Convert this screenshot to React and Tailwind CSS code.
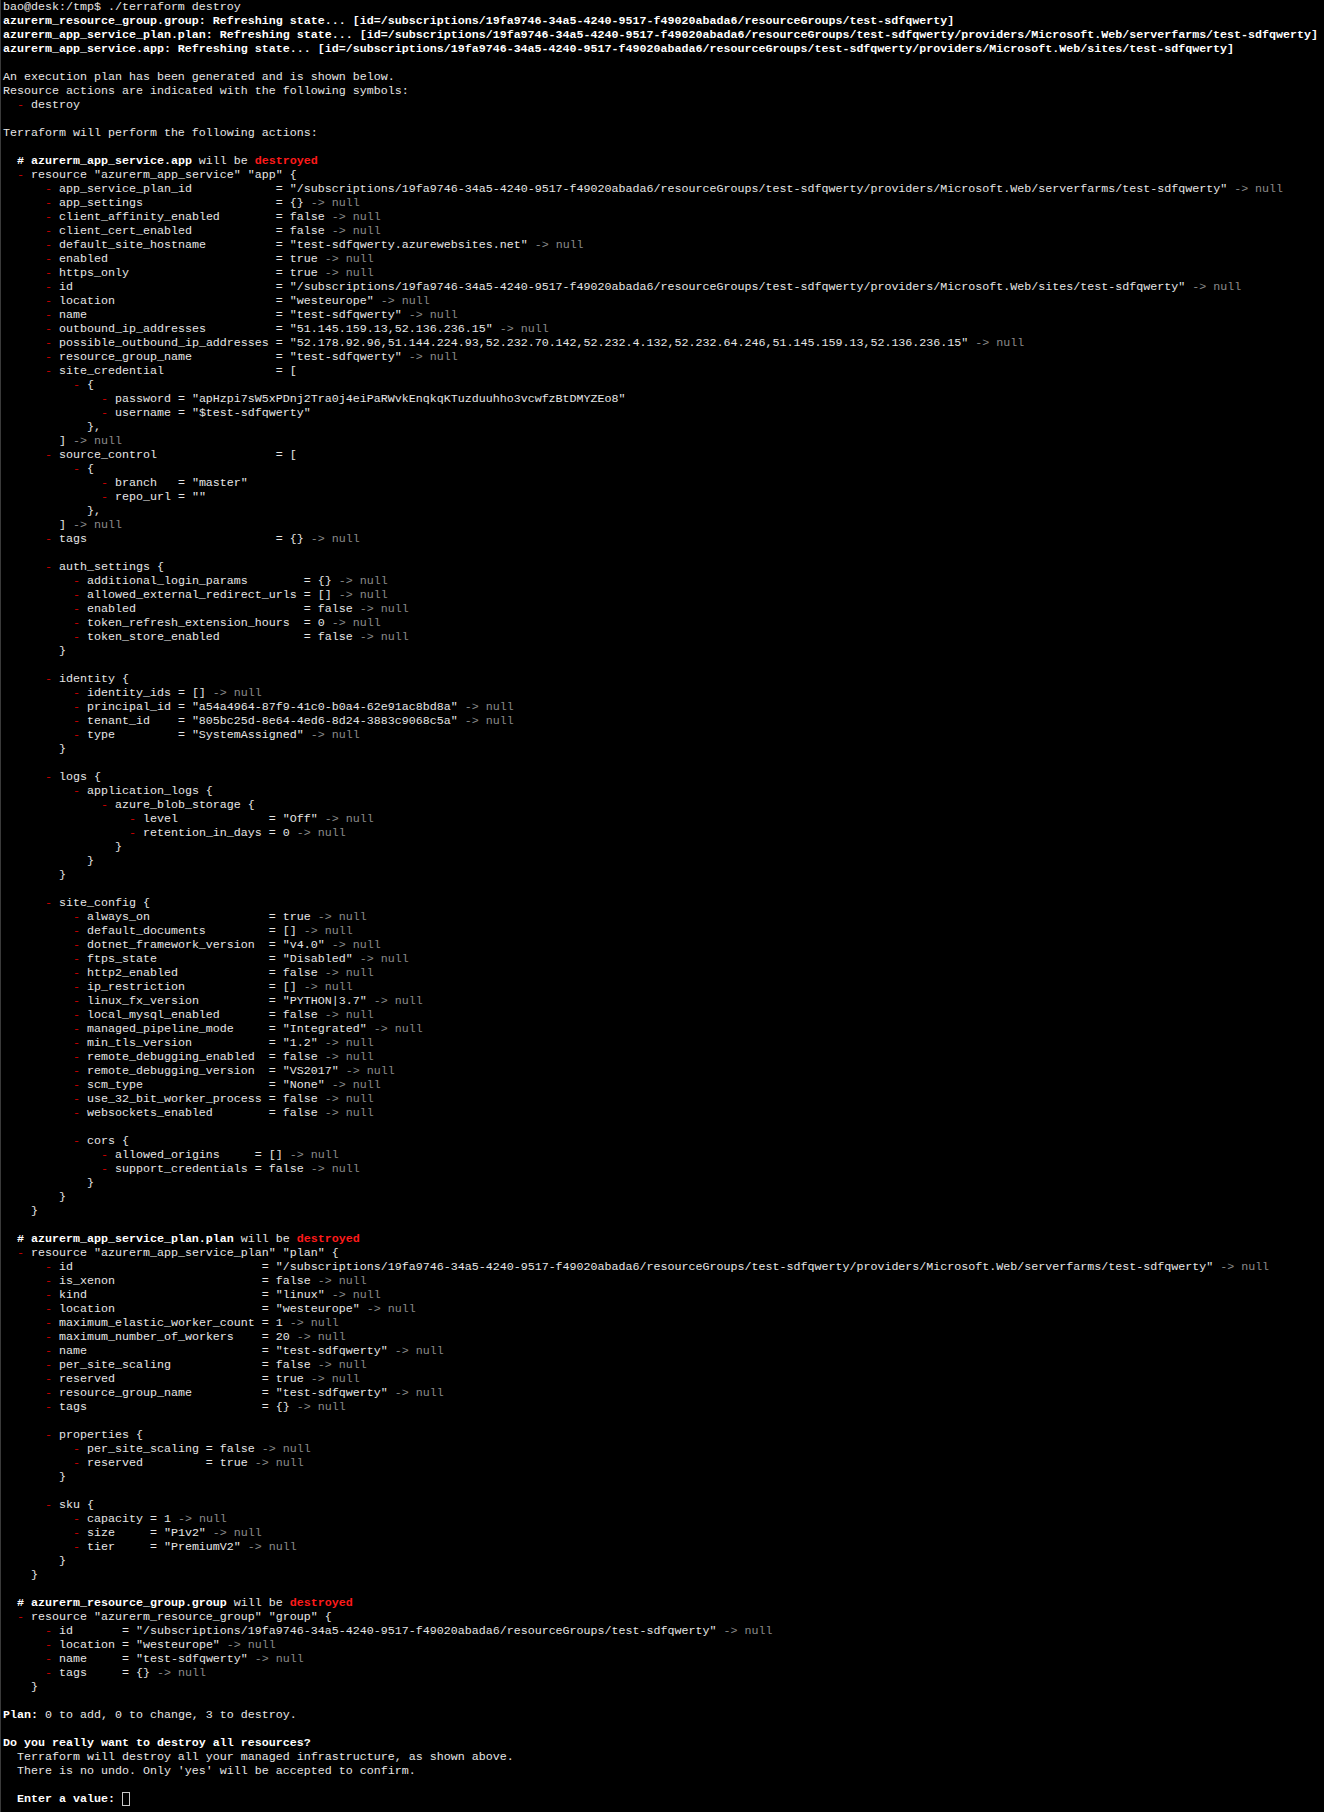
import React from 'react';

const SUB = '/subscriptions/19fa9746-34a5-4240-9517-f49020abada6/resourceGroups/test-sdfqwerty';

// attribute line: indent, key column width, key, value
const a = (ind, w, key, val, nul = true) =>
  ' '.repeat(ind) + '- ' + key.padEnd(w) + ' = ' + val + (nul ? ' -> null' : '');

const B = 'font-bold text-white';
const R = 'font-bold text-[#ff1a1a]';

const header = (name) => ({
  segs: [['  '], ['# ' + name, B], [' will be '], ['destroyed', R]],
});

const lines = [
  'bao@desk:/tmp$ ./terraform destroy',
  { segs: [['azurerm_resource_group.group: Refreshing state... [id=' + SUB + ']', B]] },
  { segs: [['azurerm_app_service_plan.plan: Refreshing state... [id=' + SUB + '/providers/Microsoft.Web/serverfarms/test-sdfqwerty]', B]] },
  { segs: [['azurerm_app_service.app: Refreshing state... [id=' + SUB + '/providers/Microsoft.Web/sites/test-sdfqwerty]', B]] },
  '',
  'An execution plan has been generated and is shown below.',
  'Resource actions are indicated with the following symbols:',
  '  - destroy',
  '',
  'Terraform will perform the following actions:',
  '',
  header('azurerm_app_service.app'),
  '  - resource "azurerm_app_service" "app" {',
  a(6, 30, 'app_service_plan_id', '"' + SUB + '/providers/Microsoft.Web/serverfarms/test-sdfqwerty"'),
  a(6, 30, 'app_settings', '{}'),
  a(6, 30, 'client_affinity_enabled', 'false'),
  a(6, 30, 'client_cert_enabled', 'false'),
  a(6, 30, 'default_site_hostname', '"test-sdfqwerty.azurewebsites.net"'),
  a(6, 30, 'enabled', 'true'),
  a(6, 30, 'https_only', 'true'),
  a(6, 30, 'id', '"' + SUB + '/providers/Microsoft.Web/sites/test-sdfqwerty"'),
  a(6, 30, 'location', '"westeurope"'),
  a(6, 30, 'name', '"test-sdfqwerty"'),
  a(6, 30, 'outbound_ip_addresses', '"51.145.159.13,52.136.236.15"'),
  a(6, 30, 'possible_outbound_ip_addresses', '"52.178.92.96,51.144.224.93,52.232.70.142,52.232.4.132,52.232.64.246,51.145.159.13,52.136.236.15"'),
  a(6, 30, 'resource_group_name', '"test-sdfqwerty"'),
  a(6, 30, 'site_credential', '[', false),
  '          - {',
  a(14, 8, 'password', '"apHzpi7sW5xPDnj2Tra0j4eiPaRWvkEnqkqKTuzduuhho3vcwfzBtDMYZEo8"', false),
  a(14, 8, 'username', '"$test-sdfqwerty"', false),
  '            },',
  '        ] -> null',
  a(6, 30, 'source_control', '[', false),
  '          - {',
  a(14, 8, 'branch', '"master"', false),
  a(14, 8, 'repo_url', '""', false),
  '            },',
  '        ] -> null',
  a(6, 30, 'tags', '{}'),
  '',
  '      - auth_settings {',
  a(10, 30, 'additional_login_params', '{}'),
  a(10, 30, 'allowed_external_redirect_urls', '[]'),
  a(10, 30, 'enabled', 'false'),
  a(10, 30, 'token_refresh_extension_hours', '0'),
  a(10, 30, 'token_store_enabled', 'false'),
  '        }',
  '',
  '      - identity {',
  a(10, 12, 'identity_ids', '[]'),
  a(10, 12, 'principal_id', '"a54a4964-87f9-41c0-b0a4-62e91ac8bd8a"'),
  a(10, 12, 'tenant_id', '"805bc25d-8e64-4ed6-8d24-3883c9068c5a"'),
  a(10, 12, 'type', '"SystemAssigned"'),
  '        }',
  '',
  '      - logs {',
  '          - application_logs {',
  '              - azure_blob_storage {',
  a(18, 17, 'level', '"Off"'),
  a(18, 17, 'retention_in_days', '0'),
  '                }',
  '            }',
  '        }',
  '',
  '      - site_config {',
  a(10, 25, 'always_on', 'true'),
  a(10, 25, 'default_documents', '[]'),
  a(10, 25, 'dotnet_framework_version', '"v4.0"'),
  a(10, 25, 'ftps_state', '"Disabled"'),
  a(10, 25, 'http2_enabled', 'false'),
  a(10, 25, 'ip_restriction', '[]'),
  a(10, 25, 'linux_fx_version', '"PYTHON|3.7"'),
  a(10, 25, 'local_mysql_enabled', 'false'),
  a(10, 25, 'managed_pipeline_mode', '"Integrated"'),
  a(10, 25, 'min_tls_version', '"1.2"'),
  a(10, 25, 'remote_debugging_enabled', 'false'),
  a(10, 25, 'remote_debugging_version', '"VS2017"'),
  a(10, 25, 'scm_type', '"None"'),
  a(10, 25, 'use_32_bit_worker_process', 'false'),
  a(10, 25, 'websockets_enabled', 'false'),
  '',
  '          - cors {',
  a(14, 19, 'allowed_origins', '[]'),
  a(14, 19, 'support_credentials', 'false'),
  '            }',
  '        }',
  '    }',
  '',
  header('azurerm_app_service_plan.plan'),
  '  - resource "azurerm_app_service_plan" "plan" {',
  a(6, 28, 'id', '"' + SUB + '/providers/Microsoft.Web/serverfarms/test-sdfqwerty"'),
  a(6, 28, 'is_xenon', 'false'),
  a(6, 28, 'kind', '"linux"'),
  a(6, 28, 'location', '"westeurope"'),
  a(6, 28, 'maximum_elastic_worker_count', '1'),
  a(6, 28, 'maximum_number_of_workers', '20'),
  a(6, 28, 'name', '"test-sdfqwerty"'),
  a(6, 28, 'per_site_scaling', 'false'),
  a(6, 28, 'reserved', 'true'),
  a(6, 28, 'resource_group_name', '"test-sdfqwerty"'),
  a(6, 28, 'tags', '{}'),
  '',
  '      - properties {',
  a(10, 16, 'per_site_scaling', 'false'),
  a(10, 16, 'reserved', 'true'),
  '        }',
  '',
  '      - sku {',
  a(10, 8, 'capacity', '1'),
  a(10, 8, 'size', '"P1v2"'),
  a(10, 8, 'tier', '"PremiumV2"'),
  '        }',
  '    }',
  '',
  header('azurerm_resource_group.group'),
  '  - resource "azurerm_resource_group" "group" {',
  a(6, 8, 'id', '"' + SUB + '"'),
  a(6, 8, 'location', '"westeurope"'),
  a(6, 8, 'name', '"test-sdfqwerty"'),
  a(6, 8, 'tags', '{}'),
  '    }',
  '',
  { segs: [['Plan:', B], [' 0 to add, 0 to change, 3 to destroy.']] },
  '',
  { segs: [['Do you really want to destroy all resources?', B]] },
  '  Terraform will destroy all your managed infrastructure, as shown above.',
  "  There is no undo. Only 'yes' will be accepted to confirm.",
  '',
  { segs: [['  '], ['Enter a value:', B], [' ']], cursor: true },
];

function Line({ line }) {
  if (typeof line !== 'string') {
    return (
      <div className="h-[14px] flex items-center">
        <span>
          {line.segs.map(([t, c], i) => (
            <span key={i} className={c}>{t}</span>
          ))}
        </span>
        {line.cursor && <span className="inline-block w-[8px] h-[14px] border border-[#c8c8c8]" />}
      </div>
    );
  }
  let lead = '';
  let dash = false;
  let body = line;
  const m = line.match(/^(\s*)- (.*)$/);
  if (m) {
    lead = m[1];
    dash = true;
    body = m[2];
  }
  let tail = '';
  if (body.endsWith(' -> null')) {
    tail = ' -> null';
    body = body.slice(0, -8);
  }
  return (
    <div className="h-[14px]">
      {lead}
      {dash && <span className="text-[#cd0000]">-</span>}
      {dash && ' '}
      {body}
      {tail && <span className="text-[#8a8a8a]">{tail}</span>}
    </div>
  );
}

export default function App() {
  return (
    <div className="w-[1324px] h-[1812px] bg-black border-l border-[#3a3a3a] pl-[2px] overflow-hidden">
      <div className="whitespace-pre text-[#e6e6e6] text-[11.66px] leading-[14px]" style={{ fontFamily: '"Liberation Mono", monospace' }}>
        {lines.map((l, i) => (
          <Line key={i} line={l} />
        ))}
      </div>
    </div>
  );
}
